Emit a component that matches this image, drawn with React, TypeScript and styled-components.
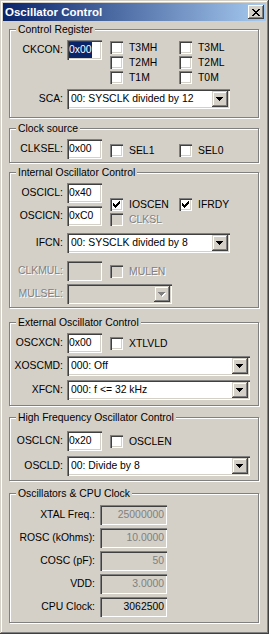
import React from "react";
import styled, { createGlobalStyle, css } from "styled-components";

const FACE = "#d4d0c8";
const SHADOW = "#808080";
const DARK = "#404040";

const GlobalStyle = createGlobalStyle`
  html, body {
    margin: 0;
    padding: 0;
    background: ${FACE};
  }
  body {
    font-family: "Liberation Sans", Arial, sans-serif;
    font-size: 10.4px;
    color: #000;
  }
`;

const dimText = css`
  color: ${SHADOW};
  text-shadow: 1px 1px 0 #fff;
`;

const sunken = css`
  box-shadow: inset 1px 1px 0 ${SHADOW}, inset 2px 2px 0 ${DARK},
    inset -1px -1px 0 #fff, inset -2px -2px 0 ${FACE};
`;

const raised = css`
  box-shadow: inset -1px -1px 0 ${DARK}, inset 1px 1px 0 ${FACE},
    inset -2px -2px 0 ${SHADOW}, inset 2px 2px 0 #fff;
`;

const Window = styled.div`
  box-sizing: border-box;
  width: 269px;
  height: 634px;
  padding: 3px;
  background: ${FACE};
  ${raised}
  display: flex;
  flex-direction: column;
`;

const TitleBar = styled.div`
  height: 18px;
  flex-shrink: 0;
  display: flex;
  align-items: center;
  padding: 0 2px;
  background: linear-gradient(to right, #0a246a, #a6caf0);
  color: #fff;
  font-weight: bold;
  font-size: 11.5px;
`;

const Title = styled.span`
  flex: 1;
  white-space: nowrap;
`;

const CloseButton = styled.span`
  width: 16px;
  height: 14px;
  background: ${FACE};
  box-shadow: inset -1px -1px 0 ${DARK}, inset 1px 1px 0 #fff,
    inset -2px -2px 0 ${SHADOW};
  display: flex;
  align-items: center;
  justify-content: center;
  padding-right: 1px;
  box-sizing: border-box;
`;

const Body = styled.div`
  display: flex;
  flex-direction: column;
  padding: 0 6px;
`;

const Group = styled.section<{ $h: number; $mt: number; $pt: number }>`
  position: relative;
  box-sizing: border-box;
  width: 250px;
  height: ${(p) => p.$h}px;
  margin-top: ${(p) => p.$mt}px;
  padding-top: ${(p) => p.$pt}px;
  border: 1px solid ${SHADOW};
  box-shadow: inset 1px 1px 0 #fff, 1px 1px 0 #fff;
  display: flex;
  flex-direction: column;
`;

const Legend = styled.span`
  position: absolute;
  top: -7px;
  left: 6px;
  padding: 0 2px;
  line-height: 13px;
  background: ${FACE};
  white-space: nowrap;
`;

const Row = styled.div<{ $mt?: number; $align?: string }>`
  display: flex;
  align-items: ${(p) => p.$align ?? "flex-start"};
  margin-top: ${(p) => p.$mt ?? 0}px;
`;

const Column = styled.div`
  display: flex;
  flex-direction: column;
`;

const Label = styled.span<{ $w?: number; $gap?: number; $dim?: boolean }>`
  flex-shrink: 0;
  width: ${(p) => p.$w ?? 53}px;
  margin-right: ${(p) => p.$gap ?? 4}px;
  height: 20px;
  line-height: 20px;
  text-align: right;
  white-space: nowrap;
  ${(p) => p.$dim && dimText}
`;

const TextBox = styled.div<{
  $w?: number;
  $face?: boolean;
  $right?: boolean;
  $grey?: boolean;
}>`
  flex-shrink: 0;
  box-sizing: border-box;
  width: ${(p) => p.$w ?? 35}px;
  height: 20px;
  padding: 0 ${(p) => (p.$right ? "3px" : "1px")} 0 2px;
  line-height: 20px;
  background: ${(p) => (p.$face ? FACE : "#fff")};
  color: ${(p) => (p.$grey ? SHADOW : "#000")};
  text-align: ${(p) => (p.$right ? "right" : "left")};
  white-space: nowrap;
  ${sunken}
`;

const Selected = styled.span`
  background: #0a246a;
  color: #fff;
  padding: 2px 0 3px;
`;

const CheckGrid = styled.div<{ $mt?: number }>`
  display: grid;
  grid-template-columns: 69px 69px;
  grid-auto-rows: 13px;
  row-gap: 2px;
  margin-left: 8px;
  margin-top: ${(p) => p.$mt ?? 0}px;
`;

const CheckItem = styled.div<{ $dim?: boolean }>`
  display: flex;
  align-items: center;
  gap: 6px;
  line-height: 13px;
  white-space: nowrap;
  ${(p) => p.$dim && dimText}
`;

const Box = styled.span<{ $dim?: boolean }>`
  box-sizing: border-box;
  width: 13px;
  height: 13px;
  flex-shrink: 0;
  display: flex;
  align-items: center;
  justify-content: center;
  background: ${(p) => (p.$dim ? FACE : "#fff")};
  ${sunken}
`;

const Combo = styled.div<{ $w: number; $dim?: boolean }>`
  box-sizing: border-box;
  width: ${(p) => p.$w}px;
  height: 20px;
  padding: 2px;
  display: flex;
  align-items: center;
  background: ${(p) => (p.$dim ? FACE : "#fff")};
  ${sunken}
`;

const ComboText = styled.span`
  flex: 1;
  padding-left: 2px;
  white-space: nowrap;
  overflow: hidden;
  line-height: 16px;
`;

const DropButton = styled.span`
  box-sizing: border-box;
  width: 16px;
  height: 16px;
  flex-shrink: 0;
  display: flex;
  align-items: center;
  justify-content: center;
  background: ${FACE};
  ${raised}
`;

const CloseGlyph = () => {
  const px: [number, number, number][] = [
    [0, 0, 2], [6, 0, 2], [1, 1, 2], [5, 1, 2], [2, 2, 4], [3, 3, 2],
    [2, 4, 4], [1, 5, 2], [5, 5, 2], [0, 6, 2], [6, 6, 2],
  ];
  return (
    <svg width="8" height="7" viewBox="0 0 8 7" shapeRendering="crispEdges">
      {px.map(([x, y, w], i) => (
        <rect key={i} x={x} y={y} width={w} height={1} fill="#000" />
      ))}
    </svg>
  );
};

const CheckMark = () => (
  <svg width="7" height="7" viewBox="0 0 7 7" shapeRendering="crispEdges">
    {[2, 3, 4, 3, 2, 1, 0].map((y, x) => (
      <rect key={x} x={x} y={y} width={1} height={3} fill="#000" />
    ))}
  </svg>
);

const Arrow = ({ dim }: { dim?: boolean }) => {
  const rows = [7, 5, 3, 1];
  return (
    <svg width="8" height="5" viewBox="0 0 8 5" shapeRendering="crispEdges">
      {dim &&
        rows.map((w, i) => (
          <rect key={"s" + i} x={i + 1} y={i + 1} width={w} height={1} fill="#fff" />
        ))}
      {rows.map((w, i) => (
        <rect key={i} x={i} y={i} width={w} height={1} fill={dim ? SHADOW : "#000"} />
      ))}
    </svg>
  );
};

const Check = ({
  label,
  checked,
  dim,
}: {
  label: string;
  checked?: boolean;
  dim?: boolean;
}) => (
  <CheckItem $dim={dim}>
    <Box $dim={dim}>{checked && <CheckMark />}</Box>
    <span>{label}</span>
  </CheckItem>
);

const Select = ({ w, value, dim }: { w: number; value?: string; dim?: boolean }) => (
  <Combo $w={w} $dim={dim}>
    <ComboText>{value}</ComboText>
    <DropButton>
      <Arrow dim={dim} />
    </DropButton>
  </Combo>
);

const clockRows = [
  { label: "XTAL Freq.:", value: "25000000", grey: true },
  { label: "ROSC (kOhms):", value: "10.0000", grey: true },
  { label: "COSC (pF):", value: "50", grey: true },
  { label: "VDD:", value: "3.0000", grey: true },
  { label: "CPU Clock:", value: "3062500", grey: false },
];

export default function App() {
  return (
    <>
      <GlobalStyle />
      <Window>
        <TitleBar>
          <Title>Oscillator Control</Title>
          <CloseButton>
            <CloseGlyph />
          </CloseButton>
        </TitleBar>
        <Body>
          <Group $h={89} $mt={8} $pt={10}>
            <Legend>Control Register</Legend>
            <Row>
              <Label>CKCON:</Label>
              <TextBox>
                <Selected>0x00</Selected>
              </TextBox>
              <CheckGrid $mt={1}>
                <Check label="T3MH" />
                <Check label="T3ML" />
                <Check label="T2MH" />
                <Check label="T2ML" />
                <Check label="T1M" />
                <Check label="T0M" />
              </CheckGrid>
            </Row>
            <Row $mt={5}>
              <Label>SCA:</Label>
              <Select w={163} value="00: SYSCLK divided by 12" />
            </Row>
          </Group>

          <Group $h={35} $mt={10} $pt={10}>
            <Legend>Clock source</Legend>
            <Row>
              <Label>CLKSEL:</Label>
              <TextBox>0x00</TextBox>
              <CheckGrid $mt={5}>
                <Check label="SEL1" />
                <Check label="SEL0" />
              </CheckGrid>
            </Row>
          </Group>

          <Group $h={136} $mt={9} $pt={10}>
            <Legend>Internal Oscillator Control</Legend>
            <Row $align="flex-end">
              <Column>
                <Row>
                  <Label>OSCICL:</Label>
                  <TextBox>0x40</TextBox>
                </Row>
                <Row $mt={3}>
                  <Label>OSCICN:</Label>
                  <TextBox>0xC0</TextBox>
                </Row>
              </Column>
              <CheckGrid>
                <Check label="IOSCEN" checked />
                <Check label="IFRDY" checked />
                <Check label="CLKSL" dim />
              </CheckGrid>
            </Row>
            <Row $mt={7}>
              <Label>IFCN:</Label>
              <Select w={163} value="00: SYSCLK divided by 8" />
            </Row>
            <Row $mt={8}>
              <Label $dim>CLKMUL:</Label>
              <TextBox $face />
              <CheckGrid $mt={4}>
                <Check label="MULEN" dim />
              </CheckGrid>
            </Row>
            <Row $mt={3}>
              <Label $dim>MULSEL:</Label>
              <Select w={105} dim />
            </Row>
          </Group>

          <Group $h={84} $mt={14} $pt={10}>
            <Legend>External Oscillator Control</Legend>
            <Row>
              <Label>OSCXCN:</Label>
              <TextBox>0x00</TextBox>
              <CheckGrid $mt={4}>
                <Check label="XTLVLD" />
              </CheckGrid>
            </Row>
            <Row $mt={3}>
              <Label>XOSCMD:</Label>
              <Select w={183} value="000: Off" />
            </Row>
            <Row $mt={4}>
              <Label>XFCN:</Label>
              <Select w={183} value="000: f <= 32 kHz" />
            </Row>
          </Group>

          <Group $h={64} $mt={11} $pt={13}>
            <Legend>High Frequency Oscillator Control</Legend>
            <Row>
              <Label>OSCLCN:</Label>
              <TextBox>0x20</TextBox>
              <CheckGrid $mt={4}>
                <Check label="OSCLEN" />
              </CheckGrid>
            </Row>
            <Row $mt={5}>
              <Label>OSCLD:</Label>
              <Select w={183} value="00: Divide by 8" />
            </Row>
          </Group>

          <Group $h={130} $mt={12} $pt={11}>
            <Legend>Oscillators &amp; CPU Clock</Legend>
            {clockRows.map((r, i) => (
              <Row key={r.label} $mt={i === 0 ? 0 : 3}>
                <Label $w={85} $gap={5}>
                  {r.label}
                </Label>
                <TextBox $w={67} $face $right $grey={r.grey}>
                  {r.value}
                </TextBox>
              </Row>
            ))}
          </Group>
        </Body>
      </Window>
    </>
  );
}
